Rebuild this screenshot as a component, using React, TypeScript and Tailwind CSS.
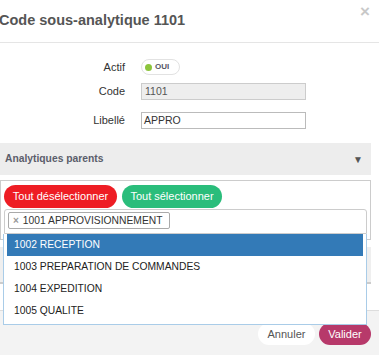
import { useState } from 'react'

const OPTIONS = ['1002 RECEPTION', '1003 PREPARATION DE COMMANDES', '1004 EXPEDITION', '1005 QUALITE']

function Toggle({ on }: { on: boolean }) {
  return (
    <span className="flex items-center gap-[3px] h-[16px] w-[39px] pl-[3px] rounded-full border border-[#e2e2e2] bg-white">
      <span className={`w-[7px] h-[7px] rounded-full ${on ? 'bg-[#8cc43c]' : 'bg-[#ccc]'}`} />
      <span className="text-[8px] font-bold text-[#556] leading-none">OUI</span>
    </span>
  )
}

function FormRow({ label, children, className = '' }: { label: string; children: React.ReactNode; className?: string }) {
  return (
    <div className={`flex items-center ${className}`}>
      <span className="w-[125px] text-right text-[11px] leading-none text-[#333]">{label}</span>
      <div className="ml-[16px] flex">{children}</div>
    </div>
  )
}

export default function App() {
  const [active] = useState(0)

  return (
    <div className="relative w-[379px] h-[355px] overflow-hidden bg-white font-['Liberation_Sans',Arial,sans-serif]">
      <div className="flex justify-between h-[43px] border-b border-[#e5e5e5]">
        <h1 className="ml-[-1px] mt-[13px] text-[14.5px] font-bold text-[#555] leading-none">Code sous-analytique 1101</h1>
        <span className="mr-[9px] mt-[3px] text-[17px] font-bold text-[#c8c8c8] leading-none">×</span>
      </div>

      <div className="pt-[16px]">
        <FormRow label="Actif">
          <Toggle on />
        </FormRow>
        <FormRow label="Code" className="mt-[8px]">
          <div className="w-[165px] h-[17px] border border-[#ccc] bg-[#eee] px-[3px] text-[10.5px] leading-[15px] text-[#555]">1101</div>
        </FormRow>
        <FormRow label="Libellé" className="mt-[12px]">
          <div className="w-[165px] h-[17px] border border-[#bbb] bg-white px-[2px] text-[10.5px] leading-[15px] text-[#333]">APPRO</div>
        </FormRow>
      </div>

      <div className="mr-[8px] mt-[14px]">
        <div className="flex items-center justify-between h-[32px] bg-[#ededed] pl-[5px] pr-[8px]">
          <span className="text-[10.3px] font-bold text-[#5b5d6b]">Analytiques parents</span>
          <span className="text-[10px] text-[#555]">▼</span>
        </div>

        <div className="relative mt-[5px] border border-[#ccc] px-[3px] pt-[4px] pb-[5px]">
          <div className="flex gap-[5px]">
            <button className="h-[23px] w-[113px] rounded-full bg-[#ee1d24] text-[11px] text-white">Tout désélectionner</button>
            <button className="h-[23px] w-[100px] rounded-full bg-[#2abd7b] text-[11px] text-white">Tout sélectionner</button>
          </div>
          <div className="mt-[1px] h-[25px] border border-[#ccc] rounded-t-[3px] bg-white px-[3px] pt-[2px]">
            <span className="flex items-center gap-[4px] h-[17px] w-[162px] whitespace-nowrap border border-[#aaa] rounded-[2px] pl-[4px] text-[10.3px] text-[#333]">
              <span className="text-[10px] font-bold text-[#999]">×</span>1001 APPROVISIONNEMENT
            </span>
          </div>

          <ul className="absolute left-[2px] top-[53px] z-10 w-[364px] border border-[#a9cce8] border-t-0 bg-white px-[3px] pb-[2px]">
            {OPTIONS.map((o, i) => (
              <li
                key={o}
                className={`flex items-center h-[22px] pl-[7px] text-[10.3px] ${i === active ? 'bg-[#337ab7] text-white' : 'text-[#222]'}`}
              >
                {o}
              </li>
            ))}
          </ul>
        </div>

        <div className="mt-[7px] h-[37px] bg-[#efefef] border-b-[2px] border-[#ccc]" />
      </div>

      <div className="absolute left-0 right-0 bottom-0 h-[45px] border-t border-[#ddd] bg-[#f3f3f3] flex justify-end items-start gap-[4px] pr-[8px] pt-[12px]">
        <button className="h-[22px] w-[57px] rounded-full bg-white text-[11px] text-[#555]">Annuler</button>
        <button className="h-[22px] w-[52px] rounded-full bg-[#b7396a] text-[11px] text-white">Valider</button>
      </div>
    </div>
  )
}
